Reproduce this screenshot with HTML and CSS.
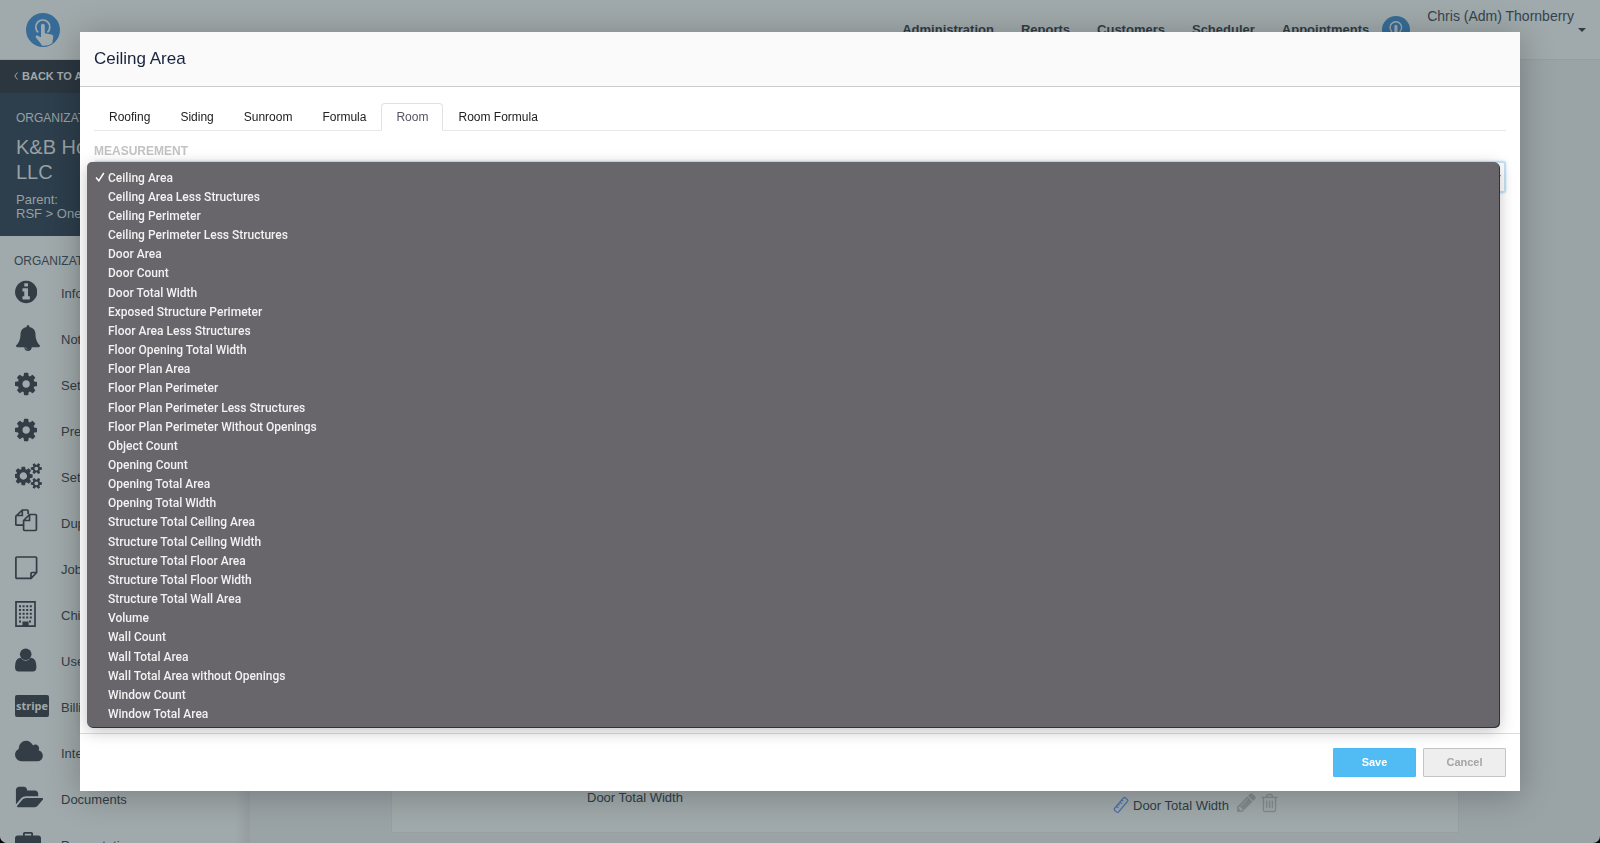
FILE: index.html
```html
<!DOCTYPE html>
<html lang="en">
<head>
    <meta charset="UTF-8">
    <meta name="viewport" content="width=device-width, initial-scale=1.0">
    <title>Ceiling Area</title>
    <link rel="stylesheet" href="styles.css">
</head>
<body>
<svg class="defs" width="0" height="0" aria-hidden="true">
    <symbol id="logo" viewBox="0 0 34 34">
        <circle cx="17" cy="17" r="17" fill="#366c97"/>
        <path d="M12.2 19.3a7 7 0 1 1 9.2 0" fill="none" stroke="#a0a9ac" stroke-width="1.7"/>
        <path d="M15 12.600a1.900 1.900 0 0 1 3.800 0v7.600l6.700 1.300q2 .5 1.800 2.600l-1 6.200q-4 3-10.200 2.500l-2-3-4.300-5.300q-.6-1.500.8-2.200l4.400 2z" fill="#a0a9ac"/>
    </symbol>
    <symbol id="cog" viewBox="128 0 1536 1792">
        <path d="M1152 896q0-106-75-181t-181-75-181 75-75 181 75 181 181 75 181-75 75-181zm512-109v222q0 12-8 23t-20 13l-185 28q-19 54-39 91 35 50 107 138 10 12 10 25t-9 23q-27 37-99 108t-94 71q-12 0-26-9l-138-108q-44 23-91 38-16 136-29 186-7 28-36 28h-222q-14 0-24.5-8.5t-11.5-21.5l-28-184q-49-16-90-37l-141 107q-10 9-25 9-14 0-25-11-126-114-165-168-7-10-7-23 0-12 8-23 15-21 51-66.5t54-70.5q-27-50-41-99l-183-27q-13-2-21-12.5t-8-23.5v-222q0-12 8-23t19-13l186-28q14-46 39-92-40-57-107-138-10-12-10-24 0-10 9-23 26-36 98.5-107.5t94.5-71.5q13 0 26 10l138 107q44-23 91-38 16-136 29-186 7-28 36-28h222q14 0 24.5 8.5t11.5 21.5l28 184q49 16 90 37l142-107q9-9 24-9 13 0 25 10 129 119 165 170 7 8 7 22 0 12-8 23-15 21-51 66.5t-54 70.5q26 50 41 98l183 28q13 2 21 12.5t8 23.5z"/>
    </symbol>
</svg>

<header class="topbar">
    <a href="#" class="brand" aria-label="Home"><svg width="34" height="34"><use href="#logo"/></svg></a>
    <nav class="topnav">
        <a href="#">Administration</a>
        <a href="#">Reports</a>
        <a href="#">Customers</a>
        <a href="#">Scheduler</a>
        <a href="#">Appointments</a>
    </nav>
    <svg class="avatar" width="28" height="28"><use href="#logo"/></svg>
    <button class="user"><span>Chris (Adm) Thornberry</span><i class="caret"></i></button>
</header>

<div class="layout">
    <aside class="sidebar">
        <a href="#" class="back"><svg width="4" height="8" viewBox="0 0 4 8"><path d="M3.500 .5L.8 4l2.700 3.500" fill="none" stroke="currentColor"/></svg>BACK TO ADMIN</a>
        <div class="org">
            <div class="org-label">ORGANIZATION</div>
            <div class="org-name">K&amp;B Home<br>LLC</div>
            <div class="org-parent">Parent:<br>RSF &gt; One</div>
        </div>
        <div class="side-title">ORGANIZATION</div>
        <ul class="side-menu">
            <li><a href="#"><span class="ico"><svg viewBox="128 0 1536 1792"><path d="M1152 1376v-160q0-14-9-23t-23-9h-96v-512q0-14-9-23t-23-9h-320q-14 0-23 9t-9 23v160q0 14 9 23t23 9h96v320h-96q-14 0-23 9t-9 23v160q0 14 9 23t23 9h448q14 0 23-9t9-23zm-128-896v-160q0-14-9-23t-23-9h-192q-14 0-23 9t-9 23v160q0 14 9 23t23 9h192q14 0 23-9t9-23zm640 416q0 209-103 385.5t-279.5 279.5-385.5 103-385.5-103-279.5-279.5-103-385.5 103-385.5 279.5-279.5 385.5-103 385.5 103 279.5 279.5 103 385.5z"/></svg></span>Information</a></li>
            <li><a href="#"><span class="ico"><svg viewBox="0 0 1792 1792"><path d="M912 1696q0-16-16-16-59 0-101.5-42.5t-42.5-101.5q0-16-16-16t-16 16q0 73 51.5 124.5t124.5 51.5q16 0 16-16zm816-288q0 52-38 90t-90 38h-448q0 106-75 181t-181 75-181-75-75-181h-448q-52 0-90-38t-38-90q50-42 91-88t85-119.5 74.5-158.5 50-206 19.5-260q0-152 117-282.5t307-158.5q-8-19-8-39 0-40 28-68t68-28 68 28 28 68q0 20-8 39 190 28 307 158.5t117 282.5q0 139 19.5 260t50 206 74.5 158.5 85 119.5 91 88z"/></svg></span>Notifications</a></li>
            <li><a href="#"><span class="ico"><svg viewBox="0 0 1536 1792"><use href="#cog" width="1536" height="1792"/></svg></span>Settings</a></li>
            <li><a href="#"><span class="ico"><svg viewBox="0 0 1536 1792"><use href="#cog" width="1536" height="1792"/></svg></span>Preferences</a></li>
            <li><a href="#"><span class="ico"><svg viewBox="0 0 1920 1792"><path d="M832 896q0-106-75-181t-181-75-181 75-75 181 75 181 181 75 181-75 75-181zm768 512q0-52-38-90t-90-38-90 38-38 90q0 53 37.5 90.5t90.5 37.5 90.5-37.5 37.5-90.5zm0-1024q0-52-38-90t-90-38-90 38-38 90q0 53 37.5 90.5t90.5 37.5 90.5-37.5 37.5-90.5zm-384 421v185q0 10-7 19.5t-16 10.5l-155 24q-11 35-32 76 34 48 90 115 7 11 7 20 0 12-7 19-23 30-82.5 89.5t-78.5 59.5q-11 0-21-7l-115-90q-37 19-77 31-11 108-23 155-7 24-30 24h-186q-11 0-20-7.5t-10-17.5l-23-153q-34-10-75-31l-118 89q-7 7-20 7-11 0-21-8-144-133-144-160 0-9 7-19 10-14 41-53t47-61q-23-44-35-82l-152-24q-10-1-17-9.5t-7-19.5v-185q0-10 7-19.5t16-10.5l155-24q11-35 32-76-34-48-90-115-7-11-7-20 0-12 7-20 22-30 82-89t79-59q11 0 21 7l115 90q34-18 77-32 11-108 23-154 7-24 30-24h186q11 0 20 7.5t10 17.5l23 153q34 10 75 31l118-89q8-7 20-7 11 0 21 8 144 133 144 160 0 8-7 19-12 16-42 54t-45 60q23 48 34 82l152 23q10 2 17 10.5t7 19.5zm640 533v140q0 16-149 31-12 27-30 52 51 113 51 138 0 4-4 7-122 71-124 71-8 0-46-47t-52-68q-20 2-30 2t-30-2q-14 21-52 68t-46 47q-2 0-124-71-4-3-4-7 0-25 51-138-18-25-30-52-149-15-149-31v-140q0-16 149-31 13-29 30-52-51-113-51-138 0-4 4-7 4-2 35-20t59-34 30-16q8 0 46 46.5t52 67.5q20-2 30-2t30 2q51-71 92-112l6-2q4 0 124 70 4 3 4 7 0 25-51 138 17 23 30 52 149 15 149 31zm0-1024v140q0 16-149 31-12 27-30 52 51 113 51 138 0 4-4 7-122 71-124 71-8 0-46-47t-52-68q-20 2-30 2t-30-2q-14 21-52 68t-46 47q-2 0-124-71-4-3-4-7 0-25 51-138-18-25-30-52-149-15-149-31v-140q0-16 149-31 13-29 30-52-51-113-51-138 0-4 4-7 4-2 35-20t59-34 30-16q8 0 46 46.500t52 67.500q20-2 30-2t30 2q51-71 92-112l6-2q4 0 124 70 4 3 4 7 0 25-51 138 17 23 30 52 149 15 149 31z"/></svg></span>Settings Groups</a></li>
            <li><a href="#"><span class="ico"><svg viewBox="0 0 24 26" class="line"><path d="M8.500 16.200H1.700Q.8 16.200.8 15.300V7.500L7.300 1h5q.8 0 .8.900V5M7.300 1v5.500H.8M14.500 5.500h6q.9 0 .9.900v14.200q0 .9-.9.900h-11q-.9 0-.9-.9V11.500zM14.500 5.500v6H8.600"/></svg></span>Duplicate</a></li>
            <li><a href="#"><span class="ico"><svg viewBox="0 0 24 26" class="line"><path d="M1.900 2h18.700q1 0 1 1v14.500l-5.500 5.800H1.900q-1 0-1-1V3q0-1 1-1zM16 23v-4.500q0-1 1-1h4.500"/></svg></span>Job Notes</a></li>
            <li><a href="#"><span class="ico"><svg viewBox="0 0 24 26" class="line"><path d="M1 .9h19v24.200H1z"/><path d="M4 5.200h13M4 9h13M4 12.800h13M4 16.600h13M4 20.400h3M14 20.400h3" stroke-width="2" stroke-dasharray="2 1.600"/><path d="M8.300 21.300h4.500v3.700H8.300z" fill="#323d45"/></svg></span>Children</a></li>
            <li><a href="#"><span class="ico"><svg viewBox="0 0 22 26"><circle cx="10.700" cy="7.300" r="5.800"/><path d="M5.500 10.800q2.200 3 5.200 3t5.200-3q5.500.6 5.500 9.200 0 4.500-3.800 4.500H3.800Q0 24.500 0 20q0-8.600 5.500-9.200z"/></svg></span>Users</a></li>
            <li><a href="#"><span class="ico"><b class="stripe">stripe</b></span>Billing</a></li>
            <li><a href="#"><span class="ico"><svg viewBox="64 0 1920 1792"><path d="M1984 1152q0 159-112.5 271.5t-271.5 112.5h-1088q-185 0-316.5-131.5t-131.5-316.5q0-132 71-241.5t187-163.5q-2-28-2-43 0-212 150-362t362-150q158 0 286.5 88t187.5 230q70-62 166-62 106 0 181 75t75 181q0 75-41 138 129 30 213 134.5t84 239.500z"/></svg></span>Integrations</a></li>
            <li><a href="#"><span class="ico"><svg viewBox="0 0 1920 1792"><path d="M1943 952q0 31-31 66l-336 396q-43 51-120.5 86.5t-143.5 35.5h-1088q-34 0-60.5-13t-26.5-43q0-31 31-66l336-396q43-51 120.5-86.5t143.5-35.5h1088q34 0 60.5 13t26.500 43zm-343-344v160h-832q-94 0-197 47.500t-164 119.500l-337 396-5 6q0-4-.5-12.500t-.5-12.500v-960q0-92 66-158t158-66h320q92 0 158 66t66 158v32h544q92 0 158 66t66 158z"/></svg></span>Documents</a></li>
            <li><a href="#"><span class="ico"><svg viewBox="0 0 26 26"><path d="M8 4.500V2.500Q8 1 9.500 1h7Q18 1 18 2.500v2h5.700Q26 4.500 26 7v6.500H0V7q0-2.500 2.300-2.500zM9.800 4.500h6.400V2.700H9.800zM0 15h10v3h6v-3h10v6.500q0 2.500-2.300 2.500H2.300Q0 24 0 21.500z"/></svg></span>Presentations</a></li>
        </ul>
    </aside>

    <main class="content">
        <table class="measurements">
            <tr>
                <td>Door Total Width</td>
                <td>
                    <div class="measure">
                        <svg width="16" height="18" viewBox="0 0 16 18" fill="none" stroke="#4a6fae" stroke-width="1.2"><path d="M1.500 12.500L10.500 1.800q.8-.9 1.700-.1l2.200 1.900q.9.800.1 1.700L5.500 16q-.8.9-1.700.1l-2.200-1.900q-.8-.8-.1-1.700zM3.500 10.200l2 1.700M5.200 8.200l1.300 1.100M7 6.100l2 1.700M8.800 4l1.300 1.100"/></svg>
                        <span>Door Total Width</span>
                        <div class="tools">
                            <button aria-label="Edit"><svg width="19" height="19" viewBox="128 128 1536 1536"><path fill="#838b8e" d="M491 1536l91-91-235-235-91 91v107h128v128h107zm523-928q0-22-22-22-10 0-17 7l-542 542q-7 7-7 17 0 22 22 22 10 0 17-7l542-542q7-7 7-17zm-54-192l416 416-832 832h-416v-416zm683 96q0 53-37 90l-166 166-416-416 166-165q36-38 90-38 53 0 91 38l235 234q37 39 37 91z"/></svg></button>
                            <button aria-label="Delete"><svg width="17" height="20" viewBox="0 0 18 20" fill="none" stroke="#838b8e" stroke-width="1.400"><path d="M.5 4h17M2.600 4v13.300q0 1.700 1.700 1.700h9.400q1.700 0 1.700-1.700V4M5.500 4l1-2.500Q6.700 1 7.300 1h3.400q.6 0 .8.500l1 2.500M6 7.500v8M9 7.500v8M12 7.500v8"/></svg></button>
                        </div>
                    </div>
                </td>
            </tr>
        </table>
    </main>
</div>

<div class="modal" role="dialog" aria-labelledby="modalTitle">
    <div class="modal-header"><h1 id="modalTitle">Ceiling Area</h1></div>
    <div class="modal-body">
        <nav class="tabs">
            <a href="#">Roofing</a>
            <a href="#">Siding</a>
            <a href="#">Sunroom</a>
            <a href="#">Formula</a>
            <a href="#" class="active">Room</a>
            <a href="#">Room Formula</a>
        </nav>
        <label for="measurement">MEASUREMENT</label>
        <select id="measurement"><option>Ceiling Area</option></select>
        <ul class="options" role="listbox">
            <li role="option" aria-selected="true"><svg width="10" height="10" viewBox="0 0 10 10"><path d="M1 5.500l2.800 3.300L8.800 1" fill="none" stroke="#fff" stroke-width="1.500"/></svg>Ceiling Area</li>
            <li role="option">Ceiling Area Less Structures</li>
            <li role="option">Ceiling Perimeter</li>
            <li role="option">Ceiling Perimeter Less Structures</li>
            <li role="option">Door Area</li>
            <li role="option">Door Count</li>
            <li role="option">Door Total Width</li>
            <li role="option">Exposed Structure Perimeter</li>
            <li role="option">Floor Area Less Structures</li>
            <li role="option">Floor Opening Total Width</li>
            <li role="option">Floor Plan Area</li>
            <li role="option">Floor Plan Perimeter</li>
            <li role="option">Floor Plan Perimeter Less Structures</li>
            <li role="option">Floor Plan Perimeter Without Openings</li>
            <li role="option">Object Count</li>
            <li role="option">Opening Count</li>
            <li role="option">Opening Total Area</li>
            <li role="option">Opening Total Width</li>
            <li role="option">Structure Total Ceiling Area</li>
            <li role="option">Structure Total Ceiling Width</li>
            <li role="option">Structure Total Floor Area</li>
            <li role="option">Structure Total Floor Width</li>
            <li role="option">Structure Total Wall Area</li>
            <li role="option">Volume</li>
            <li role="option">Wall Count</li>
            <li role="option">Wall Total Area</li>
            <li role="option">Wall Total Area without Openings</li>
            <li role="option">Window Count</li>
            <li role="option">Window Total Area</li>
        </ul>
    </div>
    <div class="modal-footer">
        <button class="btn save">Save</button>
        <button class="btn cancel">Cancel</button>
    </div>
</div>
</body>
</html>
```
FILE: styles.css
```css
* {
    box-sizing: border-box;
}
html {
    background: #000;
}
body {
    margin: 0;
    height: 100vh;
    overflow: hidden;
    display: flex;
    flex-direction: column;
    background: #9aa3a6;
    border-radius: 0 0 7px 7px;
    font-family: "Liberation Sans", Arial, sans-serif;
    font-size: 13px;
    color: #323d45;
}
a {
    color: inherit;
    text-decoration: none;
}
ul {
    list-style: none;
    margin: 0;
    padding: 0;
}
button {
    font: inherit;
    color: inherit;
    background: none;
    border: 0;
    padding: 0;
}
.defs {
    position: absolute;
}

/* top bar */
.topbar {
    flex: none;
    display: flex;
    align-items: center;
    height: 60px;
    padding: 0 14px 0 26px;
    background: #a0a9ab;
    border-bottom: 1px solid #959da0;
}
.brand {
    height: 34px;
}
.topnav {
    display: flex;
    gap: 27px;
    margin-left: auto;
    font-weight: bold;
}
.avatar {
    margin: 0 17px 0 13px;
}
.user {
    display: flex;
    align-items: center;
    gap: 4px;
    height: 60px;
    font-size: 14px;
    color: #34444f;
}
.user span {
    align-self: flex-start;
    line-height: 32px;
}
.caret {
    border: 4px solid transparent;
    border-top-color: #323d45;
    border-bottom: 0;
}

/* sidebar */
.layout {
    flex: 1;
    min-height: 0;
    display: flex;
}
.sidebar {
    flex: none;
    width: 250px;
    overflow: hidden;
    background: linear-gradient(to right, #a0a9ab 235px, #959da0);
    border-bottom-left-radius: 7px;
}
.back {
    display: flex;
    align-items: center;
    gap: 4px;
    height: 33px;
    padding: 0 14px 2px;
    background: #2b363f;
    color: #a0a9ab;
    font-size: 11px;
    font-weight: bold;
}
.org {
    height: 143px;
    padding: 17px 16px;
    background: #2d3e4c;
    color: #97a1a5;
}
.org-label {
    font-size: 12px;
    line-height: 17px;
}
.org-name {
    margin: 8px 0;
    font-size: 20px;
    line-height: 25px;
}
.org-parent {
    line-height: 14px;
}
.side-title {
    padding: 17px 14px 0;
    font-size: 12px;
    line-height: 17px;
    color: #34444f;
}
.side-menu a {
    display: flex;
    align-items: center;
    height: 46px;
    padding-left: 15px;
}
.ico {
    width: 46px;
    height: 28px;
}
.ico svg {
    display: block;
    height: 26px;
    fill: #323d45;
}
.ico .line {
    fill: none;
    stroke: #323d45;
    stroke-width: 1.7;
}
.stripe {
    display: block;
    width: 34px;
    margin-top: 2px;
    border-radius: 2px;
    background: #323d45;
    color: #a0a9ab;
    font-family: "Open Sans", sans-serif;
    font-size: 11px;
    line-height: 22px;
    text-align: center;
}

/* page behind the dialog */
.content {
    flex: 1;
    display: flex;
    flex-direction: column;
    justify-content: flex-end;
    padding: 0 141px 10px;
}
.measurements {
    width: 100%;
    border-collapse: collapse;
    background: #a0a9ab;
    border: 1px solid #979fa3;
    border-top: 0;
}
.measurements td {
    height: 60px;
    padding: 17px 0 14px 195px;
    vertical-align: top;
}
.measurements td:first-child {
    width: 50%;
}
.measurements td:last-child {
    padding-top: 20px;
    padding-left: 188px;
}
.measure {
    display: flex;
    align-items: center;
    gap: 4px;
}
.tools {
    display: flex;
    gap: 5px;
    height: 20px;
    margin: 0 0 5px 4px;
}

/* dialog */
.modal {
    position: fixed;
    top: 32px;
    left: 5%;
    right: 5%;
    height: 90vh;
    display: flex;
    flex-direction: column;
    background: #fff;
    box-shadow: 0 4px 32px rgba(0, 0, 0, 0.25);
}
.modal-header {
    padding: 14px;
    background: #fafafa;
    border-bottom: 1px solid #ccc;
}
.modal-header h1 {
    margin: 0;
    font-size: 17px;
    font-weight: normal;
    line-height: 26px;
    color: #17233f;
}
.modal-body {
    position: relative;
    flex: 1;
    padding: 16px 14px;
}
.tabs {
    display: flex;
    border-bottom: 1px solid #e6e8e9;
    font-size: 12px;
    line-height: 26px;
    color: #222;
}
.tabs a {
    margin-bottom: -1px;
    padding: 0 14px;
    border: 1px solid transparent;
    border-radius: 4px 4px 0 0;
}
.tabs .active {
    background: #fff;
    border-color: #e0e2e4;
    border-bottom-color: #fff;
    color: #556;
}
label {
    display: block;
    margin-top: 12px;
    font-size: 12px;
    font-weight: bold;
    line-height: 16px;
    color: #c3c3c3;
}
select {
    display: block;
    width: 100%;
    height: 32px;
    margin-top: 2px;
    border: 2px solid #c5e2f3;
    border-radius: 3px;
    background: #fff;
    font: inherit;
    box-shadow: 0 0 3px #c5e2f3;
}
.options {
    position: absolute;
    top: 75px;
    right: 21px;
    bottom: 6px;
    left: 7px;
    display: grid;
    grid-auto-rows: 1fr;
    align-items: center;
    padding: 6px 0 3px;
    background: #68656b;
    border-radius: 5px;
    box-shadow: 1px 1px 0 #333, 0 4px 16px rgba(0, 0, 0, 0.25);
    font-family: Roboto, sans-serif;
    font-size: 12px;
    font-weight: 500;
    line-height: 18px;
    color: #f2f2f2;
}
.options li {
    padding-left: 21px;
}
.options svg {
    margin: 0 3px 0 -13px;
}
.modal-footer {
    display: flex;
    justify-content: flex-end;
    gap: 7px;
    padding: 14px;
    border-top: 1px solid #ddd;
}
.btn {
    width: 83px;
    height: 29px;
    border: 1px solid #4db9f2;
    border-radius: 1px;
    background: #51bbf4;
    color: #fff;
    font-size: 11px;
    font-weight: bold;
}
.cancel {
    background: #eee;
    border-color: #c4c4c4;
    color: #a5a5a8;
}
```
